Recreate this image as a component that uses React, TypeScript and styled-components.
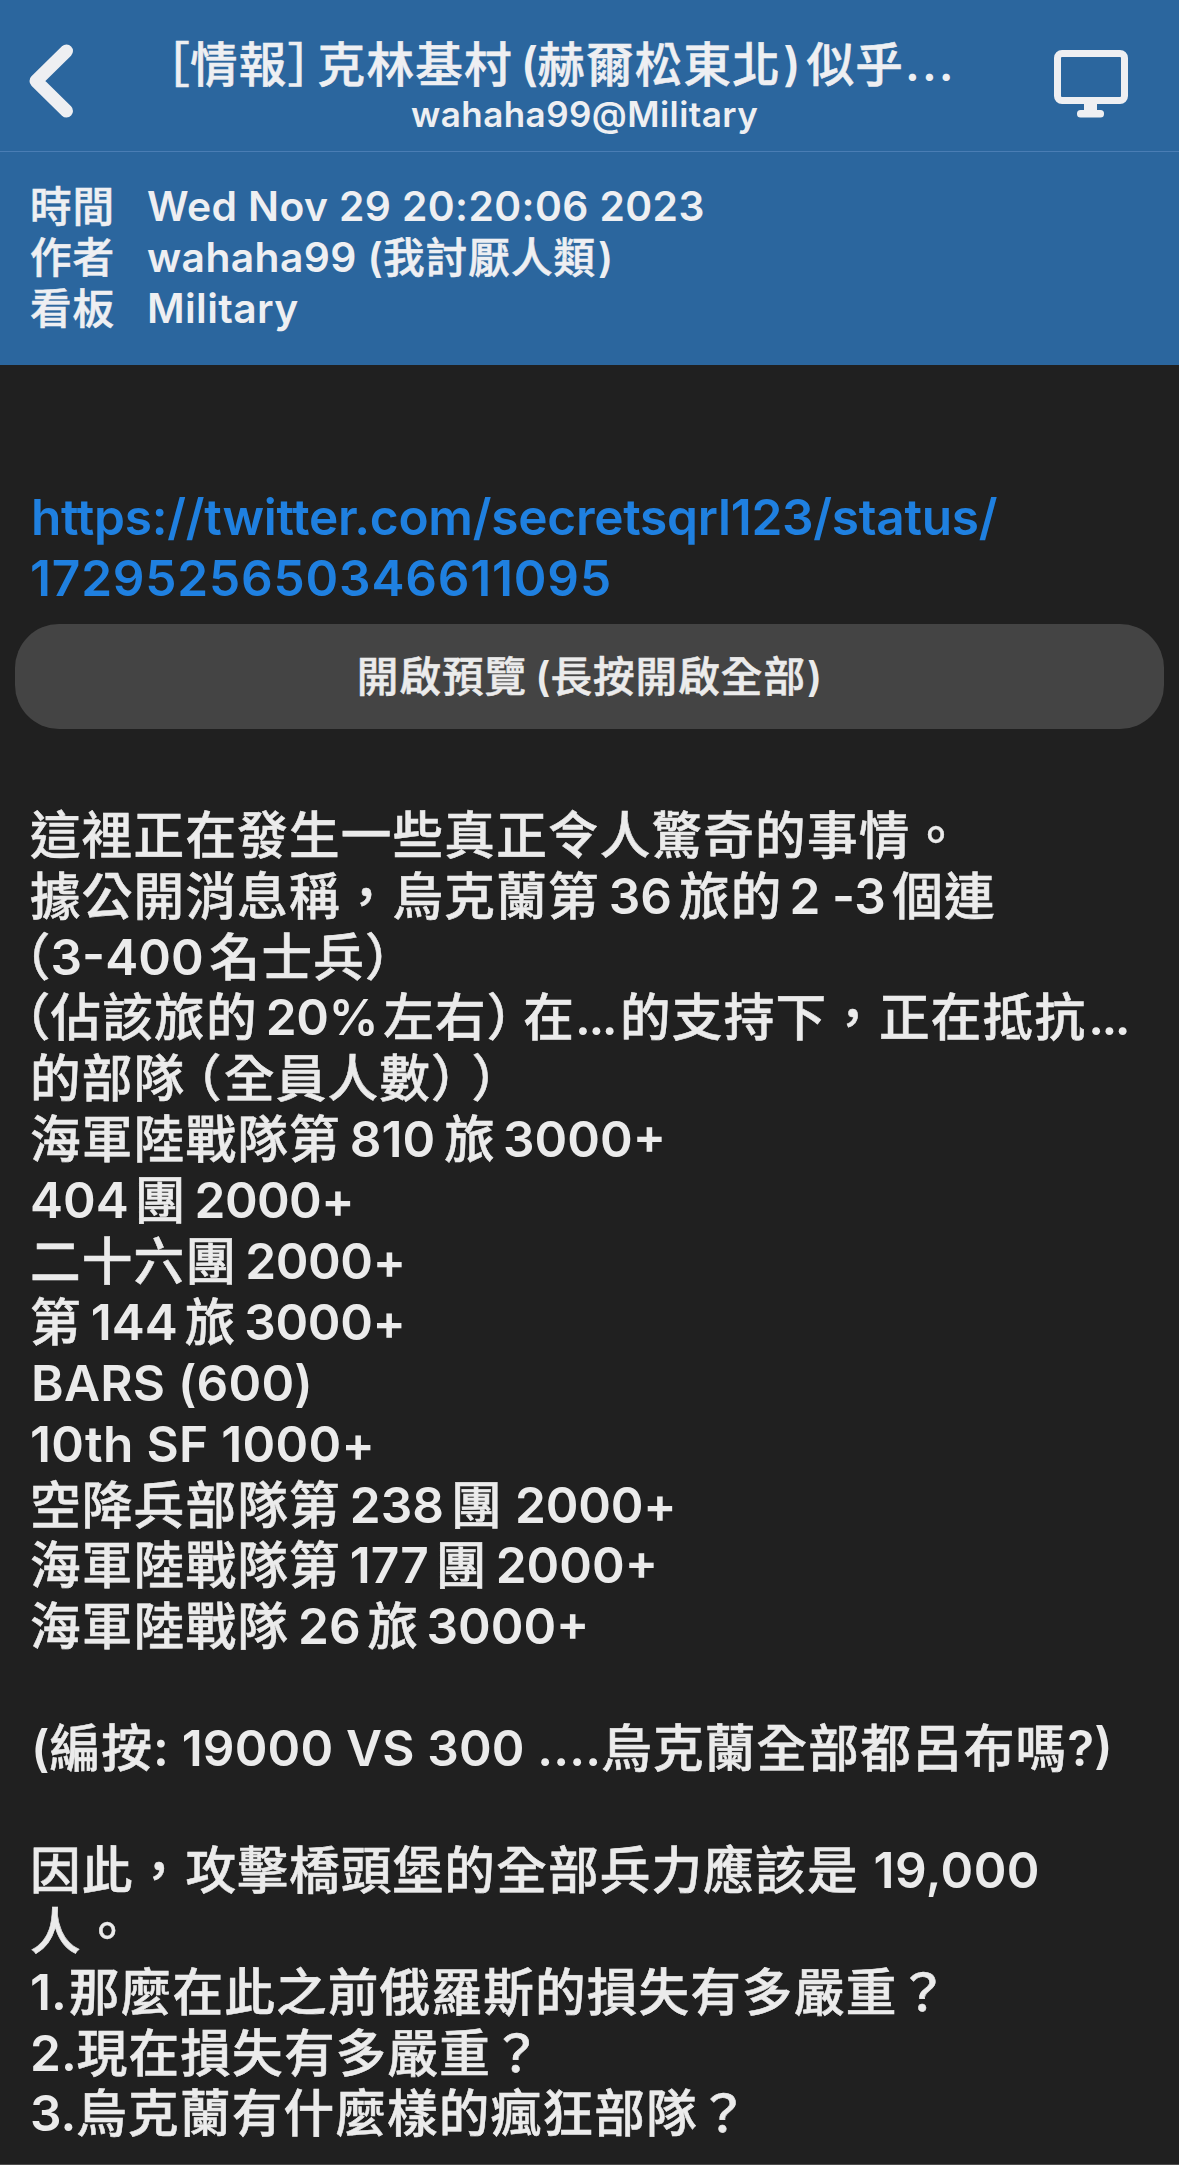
import React from 'react';
import styled, { createGlobalStyle } from 'styled-components';

const GlobalStyle = createGlobalStyle`
  *, *::before, *::after { box-sizing: border-box; }
  html, body { margin: 0; padding: 0; background: #202020; }
  body {
    font-family: Inter, "Noto Sans CJK TC", sans-serif;
    font-weight: 600;
    color: #ebebeb;
    text-autospace: no-autospace;
    overflow: hidden;
  }
`;

const Screen = styled.main`
  display: flex;
  flex-direction: column;
  width: 1179px;
  height: 2165px;
  background: #202020;
  border-bottom: 1px solid #4c4c4c;
  overflow: hidden;
`;

const Header = styled.header`
  height: 365px;
  flex: none;
  background: #2b669e;
  color: #eeeff2;
`;

const NavBar = styled.div`
  display: flex;
  height: 152px;
  border-bottom: 1px solid #4a7db4;
`;

const BackButton = styled.button`
  display: flex;
  flex: none;
  width: 120px;
  padding: 43px 0 0 27px;
  border: 0;
  background: none;
  color: inherit;
`;

const ScreenButton = styled(BackButton)`
  width: 150px;
  padding: 48px 0 0 24px;
`;

const Titles = styled.div`
  flex: 1;
  padding-top: 35px;
`;

const TitleRow = styled.div`
  padding-left: 46px;
`;

const SubtitleRow = styled.div`
  padding-left: 291px;
`;

const Meta = styled.dl`
  display: grid;
  grid-template-columns: 117px 1fr;
  grid-auto-rows: 51px;
  margin: 0;
  padding: 29px 30px 0;
`;

const MetaLabel = styled.dt`
  margin: 0;
`;

const MetaValue = styled.dd`
  margin: 0;
`;

const Article = styled.article`
  padding: 0 15px;
`;

const Link = styled.a`
  display: block;
  padding: 122px 15px 0;
  color: #1f80e0;
  text-decoration: none;
`;

const PreviewButton = styled.button`
  display: flex;
  justify-content: center;
  align-items: center;
  width: 100%;
  height: 105px;
  margin: 15px 0 76px;
  padding: 0;
  border: 0;
  border-radius: 44px;
  background: #444444;
  color: inherit;
  font: inherit;
`;

const Body = styled.div`
  padding: 0 15px;
`;

const Line = styled.div<{ $height: number }>`
  display: flex;
  align-items: baseline;
  height: ${(p) => p.$height}px;
  line-height: ${(p) => p.$height}px;
  white-space: pre;
`;

const Latin = styled.span<{ $size: number; $track: number; $before: number }>`
  font-size: ${(p) => p.$size}px;
  letter-spacing: ${(p) => p.$track}px;
  margin-left: ${(p) => p.$before}px;
`;

const Han = styled.span<{ $size: number; $pitch: number; $before: number; $half: boolean }>`
  font-size: ${(p) => p.$size}px;
  letter-spacing: ${(p) => p.$pitch - p.$size}px;
  margin-left: ${(p) => p.$before}px;
  font-feature-settings: ${(p) => (p.$half ? '"halt" 1' : 'normal')};
  font-weight: 500;
  -webkit-text-stroke: 0.55px currentColor;
  transform: translateY(1px);
`;

type Run = string | [string, number] | [string, number, number];

interface Scale {
  height: number;
  latin: number;
  track: number;
  han: number;
  pitch: number;
}

const BODY: Scale = { height: 60.9, latin: 49.6, track: 0, han: 50.6, pitch: 51.8 };
const TITLE: Scale = { height: 58, latin: 46.5, track: 0, han: 47.6, pitch: 48.8 };
const SUBTITLE: Scale = { height: 42, latin: 35, track: 0.45, han: 35, pitch: 36 };
const META: Scale = { height: 51, latin: 40.8, track: 0.4, han: 41.6, pitch: 42.6 };
const BUTTON: Scale = { height: 51, latin: 40.8, track: 0, han: 41.6, pitch: 42.6 };

const isHan = (s: string) => /[\u3000-\u9fff\uff00-\uffef]/.test(s);
const isBracket = (s: string) => /^[（）［］]$/.test(s);

function TextLine({ runs, scale }: { runs: Run[]; scale: Scale }) {
  return (
    <Line $height={scale.height}>
      {runs.map((run, i) => {
        const [text, before, track] = typeof run === 'string' ? [run, 0, undefined] : run;
        return isHan(text) ? (
          <Han key={i} $size={scale.han} $pitch={scale.pitch} $before={before} $half={isBracket(text)}>
            {text}
          </Han>
        ) : (
          <Latin key={i} $size={scale.latin} $track={track ?? scale.track} $before={before}>
            {text}
          </Latin>
        );
      })}
    </Line>
  );
}

const title: Run[] = ['［', ['情報', -1], '］', ['克林基村', 5], ['(', 8], ['赫爾松東北', -1], [')', 2], ['似乎', 6], ['...', 1, 2]];

const meta: { label: string; value: Run[] }[] = [
  { label: '時間', value: ['Wed Nov 29 20:20:06 2023'] },
  { label: '作者', value: ['wahaha99 (', '我討厭人類', [')', 2]] },
  { label: '看板', value: ['Military'] },
];

const link: Run[][] = [[['https://twitter.com/secretsqrl123/status/', 1, -0.27]], [['1729525650346611095', 0, 0.8]]];

const body: Run[][] = [
  ['這裡正在發生一些真正令人驚奇的事情。'],
  ['據公開消息稱，烏克蘭第', ['36', 9], ['旅的', 7], ['2 -3', 7, -0.5], ['個連', 7]],
  [['（', -5], ['3-400', -1], ['名士兵', 6], '）'],
  [['（', -5], ['佔該旅的', -1], ['20%', 8, -0.3], ['左右', 5], '）', ['在', 10], ['...', 0, -2.5], ['的支持下，正在抵抗', 5], ['...', 2, -2.5]],
  ['的部隊', ['（', 11], ['全員人數', 1], '）', ['）', 14]],
  ['海軍陸戰隊第', ['810', 9], ['旅', 9], ['3000+', 7]],
  ['404', ['團', 6], ['2000+', 8, -0.6]],
  ['二十六團', ['2000+', 8, -0.4]],
  ['第', ['144', 9], ['旅', 7], ['3000+', 7.5, -0.3]],
  [['BARS (600)', 1, 0.2]],
  [['10th SF 1000+', 0, 0.3]],
  ['空降兵部隊第', ['238', 9], ['團', 7], [' 2000+', 0, -0.2]],
  ['海軍陸戰隊第', ['177', 9], ['團', 7], ['2000+', 8]],
  ['海軍陸戰隊', ['26', 9], ['旅', 7], ['3000+', 7]],
  [],
  [['(', 1], '編按', [': 19000 VS 300 ....', 0, 0.15], '烏克蘭全部都呂布嗎', '?)'],
  [],
  ['因此，攻擊橋頭堡的全部兵力應該是', [' 19,000', 2, 0.4]],
  ['人。'],
  ['1.', ['那麼在此之前俄羅斯的損失有多嚴重？', 2]],
  ['2.', '現在損失有多嚴重？'],
  ['3.', '烏克蘭有什麼樣的瘋狂部隊？'],
];

function ChevronIcon() {
  return (
    <svg width="50" height="80" viewBox="0 0 50 80" fill="none">
      <path d="M39.5 8 L9 38 L39.5 68" stroke="currentColor" strokeWidth="13" strokeLinecap="round" strokeLinejoin="round" />
    </svg>
  );
}

function MonitorIcon() {
  return (
    <svg width="76" height="70" viewBox="0 0 76 70" fill="none">
      <rect x="4.5" y="5.5" width="67" height="47" rx="4.5" stroke="currentColor" strokeWidth="7" />
      <path d="M31 54h13v9H31z" fill="currentColor" />
      <rect x="24" y="62" width="27" height="7.5" rx="3.5" fill="currentColor" />
    </svg>
  );
}

export default function App() {
  return (
    <>
      <GlobalStyle />
      <Screen>
        <Header>
          <NavBar>
            <BackButton aria-label="back">
              <ChevronIcon />
            </BackButton>
            <Titles>
              <TitleRow>
                <TextLine runs={title} scale={TITLE} />
              </TitleRow>
              <SubtitleRow>
                <TextLine runs={['wahaha99@Military']} scale={SUBTITLE} />
              </SubtitleRow>
            </Titles>
            <ScreenButton aria-label="display">
              <MonitorIcon />
            </ScreenButton>
          </NavBar>
          <Meta>
            {meta.map((m) => (
              <React.Fragment key={m.label}>
                <MetaLabel>
                  <TextLine runs={[m.label]} scale={META} />
                </MetaLabel>
                <MetaValue>
                  <TextLine runs={m.value} scale={META} />
                </MetaValue>
              </React.Fragment>
            ))}
          </Meta>
        </Header>
        <Article>
          <Link href="#">
            {link.map((l, i) => (
              <TextLine key={i} runs={l} scale={BODY} />
            ))}
          </Link>
          <PreviewButton>
            <TextLine runs={['開啟預覽', ['(', 8], '長按開啟全部', [')', 1]]} scale={BUTTON} />
          </PreviewButton>
          <Body>
            {body.map((l, i) => (
              <TextLine key={i} runs={l} scale={BODY} />
            ))}
          </Body>
        </Article>
      </Screen>
    </>
  );
}
